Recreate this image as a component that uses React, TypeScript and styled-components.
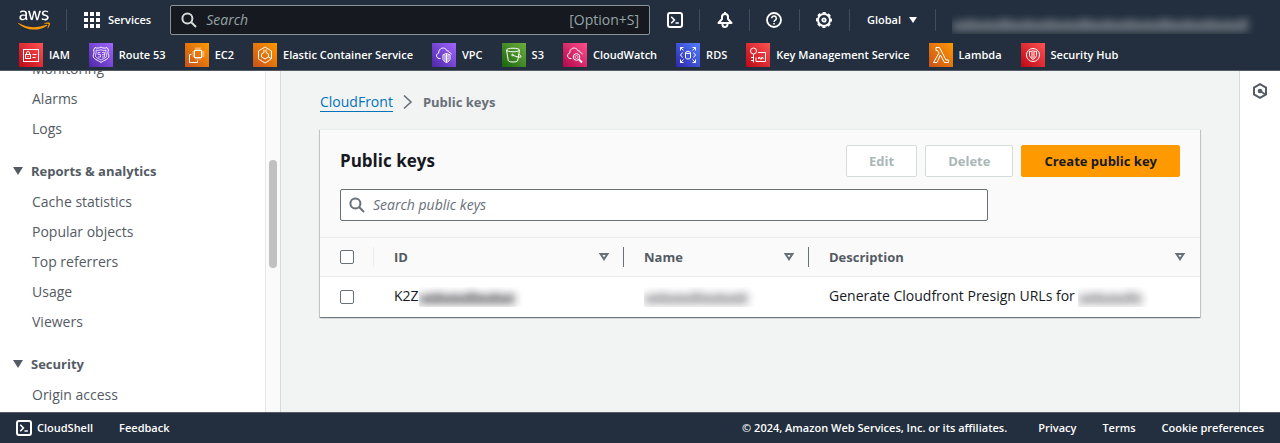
import React, { ReactNode } from "react";
import styled, { createGlobalStyle } from "styled-components";
import { FaAws } from "react-icons/fa";

const GlobalStyle = createGlobalStyle`
  * { box-sizing: border-box; }
  body {
    margin: 0;
    font-family: "Open Sans", "Noto Sans", sans-serif;
    font-size: 14px;
    line-height: 20px;
    color: #16191f;
  }
  button, input { font: inherit; }
`;

const Page = styled.div`
  display: flex;
  flex-direction: column;
  height: 100vh;
`;

/* ---------- top navigation ---------- */

const Header = styled.header`
  background: #232f3e;
  color: #fff;
  border-bottom: 1px solid #545b64;
  font-size: 11px;
  font-weight: 600;
`;

const TopBar = styled.div`
  display: flex;
  align-items: center;
  height: 40px;
  padding: 0 20px 0 18px;
`;

const LogoLink = styled.a`
  display: flex;
  align-items: center;
  width: 49px;
  height: 22px;
  border-right: 1px solid #414d5c;

  path { fill: url(#aws-logo-fill); }
`;

const BarButton = styled.button`
  display: flex;
  align-items: center;
  gap: 8px;
  padding: 0 19px 0 17px;
  border: 0;
  background: none;
  color: inherit;
  white-space: nowrap;
`;

const GlobalSearch = styled.label`
  flex: 0 1 480px;
  display: flex;
  align-items: center;
  gap: 9px;
  height: 30px;
  padding: 0 10px;
  border: 1px solid #879596;
  border-radius: 2px;
  background: #16191f;
  color: #95a5a6;
  font-size: 14px;
  font-weight: 400;

  svg { color: #d5dbdb; }
  input {
    flex: 1;
    min-width: 0;
    padding: 0;
    border: 0;
    outline: 0;
    background: none;
    color: #fff;
  }
  input::placeholder { color: #95a5a6; font-style: italic; opacity: 1; }
`;

const IconButton = styled.button`
  display: flex;
  align-items: center;
  justify-content: center;
  width: 50px;
  height: 22px;
  padding: 0;
  border: 0;
  border-right: 1px solid #414d5c;
  background: none;
  color: #fff;
`;

const RegionButton = styled(BarButton)`
  height: 22px;
  padding: 0 18px 0 17px;
  border-right: 1px solid #414d5c;
`;

const AccountButton = styled.button`
  flex: 1;
  display: flex;
  align-items: flex-end;
  height: 28px;
  margin-left: 16px;
  padding: 0;
  border: 0;
  background: none;
`;

const Favorites = styled.nav`
  display: flex;
  align-items: center;
  gap: 19px;
  height: 30px;
  padding: 0 19px;
`;

const Favorite = styled.a`
  display: flex;
  align-items: center;
  gap: 6px;
  color: #fff;
  text-decoration: none;
  white-space: nowrap;
`;

/* ---------- page body ---------- */

const Body = styled.div`
  flex: 1;
  min-height: 0;
  display: flex;
`;

const SidePanel = styled.div`
  flex: none;
  display: flex;
  width: 281px;
  border-right: 1px solid #d5dbdb;
  background: #fff;
  overflow: hidden;
`;

const SideNav = styled.nav`
  flex: 1;
  margin-top: -17px;
  color: #545b64;
`;

const NavList = styled.ul`
  margin: 0 0 11px;
  padding: 0 0 0 32px;
  list-style: none;
`;

const NavItem = styled.a`
  display: block;
  padding: 5px 0;
  color: inherit;
  text-decoration: none;
`;

const NavGroup = styled.button`
  display: flex;
  align-items: center;
  gap: 8px;
  height: 32px;
  padding: 0 0 0 13px;
  border: 0;
  background: none;
  color: inherit;
  font-size: 13px;
  font-weight: 700;
`;

const ScrollTrack = styled.div`
  width: 15px;
  padding: 89px 3px 0;
  border-left: 1px solid #e8e8e8;
  background: #fafafa;
`;

const ScrollThumb = styled.div`
  height: 108px;
  border-radius: 4px;
  background: #c1c1c1;
`;

const Main = styled.main`
  flex: 1;
  min-width: 0;
  padding: 21px 39px 20px;
  background: #f2f3f3;
`;

const Breadcrumbs = styled.nav`
  display: flex;
  align-items: center;
  gap: 10px;
  margin-bottom: 17px;
  color: #687078;
  font-size: 13px;
  font-weight: 700;

  a {
    color: #0073bb;
    font-size: 14px;
    font-weight: 400;
    text-decoration: none;
    border-bottom: 1px solid #0073bb;
    line-height: 19px;
  }
`;

const Card = styled.section`
  border-top: 1px solid #eaeded;
  background: #fff;
  box-shadow: 0 1px 1px 0 rgba(0, 28, 36, 0.4), 1px 1px 1px 0 rgba(0, 28, 36, 0.15),
    -1px 1px 1px 0 rgba(0, 28, 36, 0.15);
`;

const CardHeader = styled.div`
  padding: 15px 20px 16px;
  background: #fafafa;
  border-bottom: 1px solid #eaeded;
`;

const TitleRow = styled.div`
  display: flex;
  align-items: center;
  gap: 8px;
  margin-bottom: 12px;

  h1 {
    flex: 1;
    margin: 0;
    font-size: 17px;
    line-height: 22px;
    font-weight: 700;
  }
`;

const Button = styled.button<{ $primary?: boolean }>`
  height: 32px;
  padding: 0 22px;
  border: 1px solid ${(p) => (p.$primary ? "#ff9900" : "#d5dbdb")};
  border-radius: 2px;
  background: ${(p) => (p.$primary ? "#ff9900" : "#fff")};
  color: ${(p) => (p.$primary ? "#16191f" : "#aab7b8")};
  font-size: 13px;
  font-weight: 700;
  white-space: nowrap;
`;

const FilterBox = styled.label`
  display: flex;
  align-items: center;
  gap: 8px;
  max-width: 648px;
  height: 32px;
  padding: 0 8px;
  border: 1px solid #687078;
  border-radius: 2px;
  background: #fff;
  color: #687078;

  input {
    flex: 1;
    min-width: 0;
    padding: 0;
    border: 0;
    outline: 0;
    background: none;
  }
  input::placeholder { color: #687078; font-style: italic; opacity: 1; }
`;

const Table = styled.table`
  width: 100%;
  table-layout: fixed;
  border-collapse: collapse;
  text-align: left;

  thead tr { height: 38px; background: #fafafa; border-bottom: 1px solid #eaeded; }
  tbody tr { height: 41px; }
  th, td { padding: 0 0 0 20px; white-space: nowrap; }
`;

const HeadCell = styled.div<{ $divider?: string }>`
  display: flex;
  align-items: center;
  justify-content: space-between;
  height: 20px;
  padding-right: ${(p) => (p.$divider ? 14 : 15)}px;
  border-right: ${(p) => (p.$divider ? `1px solid ${p.$divider}` : "0")};
  color: #545b64;
  font-size: 13px;
  font-weight: 700;
`;

const Checkbox = styled.input`
  appearance: none;
  display: block;
  width: 14px;
  height: 14px;
  margin: 0;
  border: 1px solid #687078;
  border-radius: 2px;
  background: #fff;
`;

const Masked = styled.span<{ $width: number }>`
  display: inline-block;
  width: ${(p) => p.$width}px;
  height: 20px;
  overflow: hidden;
  vertical-align: middle;

  svg { display: block; }
`;

const ToolRail = styled.aside`
  flex: none;
  width: 41px;
  padding-top: 12px;
  border-left: 1px solid #d5dbdb;
  background: #fff;

  button {
    display: block;
    margin: 0 auto;
    padding: 0;
    border: 0;
    background: none;
    color: #545b64;
  }
  svg { display: block; }
`;

/* ---------- footer ---------- */

const Footer = styled.footer`
  display: flex;
  align-items: center;
  gap: 26px;
  height: 31px;
  padding: 0 16px;
  border-top: 1px solid #545b64;
  background: #232f3e;
  color: #fff;
  font-size: 11px;
  font-weight: 600;
  white-space: nowrap;

  a, button {
    display: flex;
    align-items: center;
    gap: 5px;
    padding: 0;
    border: 0;
    background: none;
    color: inherit;
    text-decoration: none;
  }
`;

const Copyright = styled.span`
  margin-left: auto;
  margin-right: 5px;
`;

/* ---------- icons ---------- */

const SearchIcon = () => (
  <svg width="16" height="16" viewBox="0 0 16 16" fill="none" stroke="currentColor" strokeWidth="2">
    <circle cx="6.4" cy="6.4" r="5" />
    <path d="M10 10l5 5" />
  </svg>
);

const ShellIcon = () => (
  <svg width="16" height="16" viewBox="0 0 16 16" fill="none" stroke="currentColor">
    <rect x="1" y="1" width="14" height="14" rx="2" strokeWidth="2" />
    <path d="M4.2 4.8L7.4 8l-3.2 3.2M8.5 11h3.3" strokeWidth="1.6" />
  </svg>
);

const BellIcon = () => (
  <svg width="16" height="16" viewBox="0 0 16 16" fill="none" stroke="currentColor" strokeWidth="2">
    <path d="M1.5 11h13L11 7V5a3 3 0 0 0-6 0v2z" strokeLinejoin="round" />
    <path d="M5.500 11.500v1a2.500 2.500 0 0 0 5 0v-1M8 2V0" />
  </svg>
);

const HelpIcon = () => (
  <svg width="16" height="16" viewBox="0 0 16 16" fill="none" stroke="currentColor" strokeWidth="1.8">
    <circle cx="8" cy="8" r="7" />
    <path d="M5.700 6.300a2.300 2.300 0 1 1 3.600 1.900C8.400 8.800 8 9.100 8 10M8 11.100v1.500" strokeWidth="1.5" />
  </svg>
);

const GearIcon = () => (
  <svg width="16" height="16" viewBox="0 0 16 16" fill="none" stroke="currentColor">
    <circle cx="8" cy="8" r="6" strokeWidth="2" />
    <circle cx="8" cy="8" r="7.2" strokeWidth="1.6" strokeDasharray="3.25 2.405" strokeDashoffset="1.625" />
    <circle cx="8" cy="8" r="1.7" strokeWidth="1.8" />
  </svg>
);

const GridIcon = () => (
  <svg width="16" height="16" viewBox="0 0 16 16" fill="currentColor">
    {[0, 6, 12].map((y) => [0, 6, 12].map((x) => <rect key={`${x}-${y}`} x={x} y={y} width="4" height="4" />))}
  </svg>
);

const CaretIcon = () => (
  <svg width="10" height="8" viewBox="0 0 10 8" fill="currentColor">
    <path d="M0 0h10L5 8z" />
  </svg>
);

const RegionCaret = () => (
  <svg width="8" height="6" viewBox="0 0 8 6" fill="currentColor">
    <path d="M0 0h8L4 6z" />
  </svg>
);

const SortIcon = () => (
  <svg width="10" height="8" viewBox="0 0 10 8" fill="none" stroke="#687078" strokeWidth="2">
    <path d="M1.600 1h6.800L5 6.200z" />
  </svg>
);

const ChevronIcon = () => (
  <svg width="10" height="16" viewBox="0 0 10 16" fill="none" stroke="#687078" strokeWidth="1.6">
    <path d="M1 1.500L8 8l-7 6.500" />
  </svg>
);

const HexIcon = () => (
  <svg width="16" height="16" viewBox="0 0 16 16" fill="none" stroke="currentColor" strokeWidth="2">
    <path d="M8 1.200l6 3.300v7L8 14.800l-6-3.300v-7z" />
    <circle cx="8" cy="8" r="2.300" fill="currentColor" stroke="none" />
    <path d="M8 8l5.500 3.500" strokeWidth="1.700" />
  </svg>
);

/* ---------- service tiles ---------- */

const cloud = "M8.500 15.500H7c-3-.5-3.300-4.600-.3-5.500C6.600 6.500 9.500 4.300 12.500 5.300c1.300.5 2.100 1.500 2.400 2.700 1-.5 2.200.1 2.300 1.400 1.200.3 1.900.8 2.100 1.900";

type Tone = "red" | "purple" | "orange" | "green" | "pink" | "blue";

const tones: Record<Tone, [string, string]> = {
  red: ["#bd0816", "#ff5252"],
  purple: ["#4d27a8", "#a166ff"],
  orange: ["#c8511b", "#ff9900"],
  green: ["#1b660f", "#6cae3e"],
  pink: ["#b0084d", "#ff4f8b"],
  blue: ["#2e27ad", "#527fff"],
};

const services: { name: string; tone: Tone; art: ReactNode }[] = [
  {
    name: "IAM",
    tone: "red",
    art: (
      <>
        <rect x="4.500" y="6.500" width="15" height="12" />
        <rect x="6.500" y="11.500" width="5" height="4" />
        <path d="M7.500 11.500V10a1.500 1.500 0 0 1 3 0v1.500M9 13v1M13.500 11.500h4M13.500 14.500h3" />
      </>
    ),
  },
  {
    name: "Route 53",
    tone: "purple",
    art: (
      <>
        <path d="M6 4.500c2 1 4 .8 6-.5 2 1.300 4 1.500 6 .5l1.500 2.500c-1 2-.5 3.500.3 5.500.7 3.500-4.800 4.500-7.800 7-3-2.500-8.500-3.500-7.800-7 .8-2 1.300-3.500.3-5.500z" />
        <path d="M7 7c2 .7 3.500.5 5-.4 1.500.9 3 1.100 5 .4-.4 2 0 3.500.6 5.500.4 2.200-3.600 3-5.600 4.700-2-1.700-6-2.500-5.600-4.700C7 10.500 7.400 9 7 7z" strokeWidth=".8" />
        <path d="M11.500 9.500H9v2h2.500V14H9M13 9.500h2.500V14H13M13 11.700h2.500" strokeWidth=".7" />
      </>
    ),
  },
  {
    name: "EC2",
    tone: "orange",
    art: (
      <>
        <rect x="9.500" y="7.500" width="7" height="7" />
        <path d="M11 7.500v-3M13 7.500v-3M15 7.500v-3M11 14.500v2M13 14.500v2M15 14.500v2M16.500 9h3M16.500 11h3M16.500 13h3M9.500 9h-2M9.500 11h-2M9.500 13h-2" strokeWidth=".8" />
        <path d="M6.500 11.500h-2v8h8v-2" />
      </>
    ),
  },
  {
    name: "Elastic Container Service",
    tone: "orange",
    art: (
      <>
        <path d="M18.500 15.500V8L12 4 5.500 8v8l6.500 4 4-2.500" />
        <path d="M11 6.500v3l-2.500 1.500v3L12 16l3.500-2v-3L13 9.500v-3" />
        <path d="M16 17.500l2.500-2-3-1.500" />
      </>
    ),
  },
  {
    name: "VPC",
    tone: "purple",
    art: (
      <>
        <path d={cloud} />
        <path d="M14.500 10.500l3.500 1.300v4.700c-.5 1.500-2 2.500-3.500 3-1.500-.5-3-1.500-3.500-3v-4.700zM14.500 10.500v9M13 12v6.300M16 12v6.300" />
      </>
    ),
  },
  {
    name: "S3",
    tone: "green",
    art: (
      <>
        <ellipse cx="11" cy="7" rx="6.500" ry="1.800" />
        <path d="M4.500 7l1.800 10.800c1.500 1.700 8 1.700 9.400 0L17.500 7M11 12.200c2.500 1.300 5.500 2.200 7.800 2 .8-.8-.4-2-2-3" />
        <circle cx="10.500" cy="12" r=".8" />
      </>
    ),
  },
  {
    name: "CloudWatch",
    tone: "pink",
    art: (
      <>
        <path d={cloud} />
        <circle cx="13.500" cy="14" r="3.300" />
        <circle cx="13.500" cy="14" r="1.500" strokeWidth=".6" />
        <path d="M16 16.500l3 3" strokeWidth="1.800" />
      </>
    ),
  },
  {
    name: "RDS",
    tone: "blue",
    art: (
      <>
        <ellipse cx="12" cy="9.500" rx="2.500" ry="1" />
        <path d="M9.500 9.500v5.500c.5 1.200 4.500 1.200 5 0V9.500M6.500 9.500l-2 2.500 2 2.500M17.500 9.500l2 2.500-2 2.500" />
        <path d="M4.500 7.500v-3h3M4.500 4.500L7.500 7.500M16.500 4.500h3v3M19.500 4.500l-3 3M4.500 16.500v3h3M4.500 19.500l3-3M16.500 19.500h3v-3M19.500 19.500l-3-3" />
      </>
    ),
  },
  {
    name: "Key Management Service",
    tone: "red",
    art: (
      <>
        <circle cx="7.500" cy="8" r="3" />
        <path d="M7.500 11v8.500M7.500 14.500H5M7.500 17.500H5" />
        <path d="M12 9.500h7.500v9H10M10 18.500v-4M12.500 16v-1.500h1.500V16h1.500v-1.500H17V16" />
      </>
    ),
  },
  {
    name: "Lambda",
    tone: "orange",
    art: <path d="M4.500 19.500L10 10 8.500 7.500H7v-3h3.500l6.500 12.500h2.500v2.500h-4L11.300 12l-3.300 7.500z" />,
  },
  {
    name: "Security Hub",
    tone: "red",
    art: (
      <>
        <circle cx="12" cy="12" r="6.500" />
        <path d="M12 7.500c1 1 2.500 1 3.500.7v4.300c-.5 2-2 3-3.500 4-1.500-1-3-2-3.500-4V8.200c1 .3 2.500.3 3.500-.7zM11 8.500v7M13 8.500v7" />
      </>
    ),
  },
];

const ServiceTile = ({ tone, id, children }: { tone: Tone; id: string; children: ReactNode }) => (
  <svg width="24" height="24" viewBox="0 0 24 24" fill="none" stroke="#fff" strokeWidth="1">
    <defs>
      <linearGradient id={id} x1="0" y1="1" x2="1" y2="0">
        <stop offset="0" stopColor={tones[tone][0]} />
        <stop offset="1" stopColor={tones[tone][1]} />
      </linearGradient>
    </defs>
    <rect width="24" height="24" fill={`url(#${id})`} stroke="none" />
    {children}
  </svg>
);

/* A redacted value: soft blurred bars where the private text would stand. */
const barHeights = [9, 10, 11, 9, 10, 9, 12, 10, 9, 11];

const Redacted = ({
  width,
  id,
  color = "#16191f",
  opacity = 0.35,
}: {
  width: number;
  id: string;
  color?: string;
  opacity?: number;
}) => (
  <Masked $width={width} role="img" aria-label="Redacted">
    <svg width={width} height="20" viewBox={`0 0 ${width} 20`}>
      <filter id={id} x="-10%" y="-100%" width="120%" height="300%">
        <feGaussianBlur stdDeviation="4" />
      </filter>
      <g filter={`url(#${id})`} fill={color} opacity={opacity}>
        {Array.from({ length: Math.floor((width - 10) / 8) }, (_, i) => {
          const h = barHeights[i % barHeights.length];
          return <rect key={i} x={i * 8} y={17 - h} width="8" height={h} />;
        })}
      </g>
    </svg>
  </Masked>
);

/* ---------- app ---------- */

const reports = ["Cache statistics", "Popular objects", "Top referrers", "Usage", "Viewers"];

const NavLinks = ({ items }: { items: string[] }) => (
  <NavList>
    {items.map((item) => (
      <li key={item}>
        <NavItem href="#">{item}</NavItem>
      </li>
    ))}
  </NavList>
);

export default function App() {
  return (
    <Page>
      <GlobalStyle />
      <Header>
        <TopBar>
          <LogoLink href="#" aria-label="AWS home">
            <svg width="0" height="0">
              <linearGradient id="aws-logo-fill" gradientUnits="userSpaceOnUse" x1="0" y1="0" x2="0" y2="512">
                <stop offset="0.555" stopColor="#fff" />
                <stop offset="0.555" stopColor="#ff9900" />
              </linearGradient>
            </svg>
            <FaAws size={32} />
          </LogoLink>
          <BarButton>
            <GridIcon />
            Services
          </BarButton>
          <GlobalSearch>
            <SearchIcon />
            <input type="text" placeholder="Search" aria-label="Search" />
            [Option+S]
          </GlobalSearch>
          <IconButton aria-label="CloudShell"><ShellIcon /></IconButton>
          <IconButton aria-label="Notifications"><BellIcon /></IconButton>
          <IconButton aria-label="Help"><HelpIcon /></IconButton>
          <IconButton aria-label="Settings"><GearIcon /></IconButton>
          <RegionButton>
            Global
            <RegionCaret />
          </RegionButton>
          <AccountButton aria-label="Account">
            <Redacted width={308} id="mask-account" color="#d5dbdb" opacity={0.4} />
          </AccountButton>
        </TopBar>
        <Favorites aria-label="Favorites">
          {services.map((s, i) => (
            <Favorite href="#" key={s.name}>
              <ServiceTile tone={s.tone} id={`tile-${i}`}>{s.art}</ServiceTile>
              {s.name}
            </Favorite>
          ))}
        </Favorites>
      </Header>

      <Body>
        <SidePanel>
          <SideNav aria-label="CloudFront">
            <NavLinks items={["Monitoring", "Alarms", "Logs"]} />
            <NavGroup>
              <CaretIcon />
              Reports &amp; analytics
            </NavGroup>
            <NavLinks items={reports} />
            <NavGroup>
              <CaretIcon />
              Security
            </NavGroup>
            <NavLinks items={["Origin access"]} />
          </SideNav>
          <ScrollTrack>
            <ScrollThumb />
          </ScrollTrack>
        </SidePanel>

        <Main>
          <Breadcrumbs aria-label="Breadcrumbs">
            <a href="#">CloudFront</a>
            <ChevronIcon />
            <span>Public keys</span>
          </Breadcrumbs>
          <Card>
            <CardHeader>
              <TitleRow>
                <h1>Public keys</h1>
                <Button disabled>Edit</Button>
                <Button disabled>Delete</Button>
                <Button $primary>Create public key</Button>
              </TitleRow>
              <FilterBox>
                <SearchIcon />
                <input type="text" placeholder="Search public keys" aria-label="Search public keys" />
              </FilterBox>
            </CardHeader>
            <Table>
              <colgroup>
                <col style={{ width: 54 }} />
                <col style={{ width: 250 }} />
                <col style={{ width: 185 }} />
                <col />
              </colgroup>
              <thead>
                <tr>
                  <th>
                    <HeadCell $divider="#eaeded">
                      <Checkbox type="checkbox" aria-label="Select all keys" />
                    </HeadCell>
                  </th>
                  <th><HeadCell $divider="#687078">ID<SortIcon /></HeadCell></th>
                  <th><HeadCell $divider="#687078">Name<SortIcon /></HeadCell></th>
                  <th><HeadCell>Description<SortIcon /></HeadCell></th>
                </tr>
              </thead>
              <tbody>
                <tr>
                  <td><Checkbox type="checkbox" aria-label="Select key" /></td>
                  <td>K2Z<Redacted width={110} id="mask-id" opacity={0.5} /></td>
                  <td><Redacted width={116} id="mask-name" /></td>
                  <td>Generate Cloudfront Presign URLs for <Redacted width={80} id="mask-desc" /></td>
                </tr>
              </tbody>
            </Table>
          </Card>
        </Main>

        <ToolRail>
          <button aria-label="Open tools panel"><HexIcon /></button>
        </ToolRail>
      </Body>

      <Footer>
        <button><ShellIcon />CloudShell</button>
        <a href="#">Feedback</a>
        <Copyright>© 2024, Amazon Web Services, Inc. or its affiliates.</Copyright>
        <a href="#">Privacy</a>
        <a href="#">Terms</a>
        <a href="#">Cookie preferences</a>
      </Footer>
    </Page>
  );
}
